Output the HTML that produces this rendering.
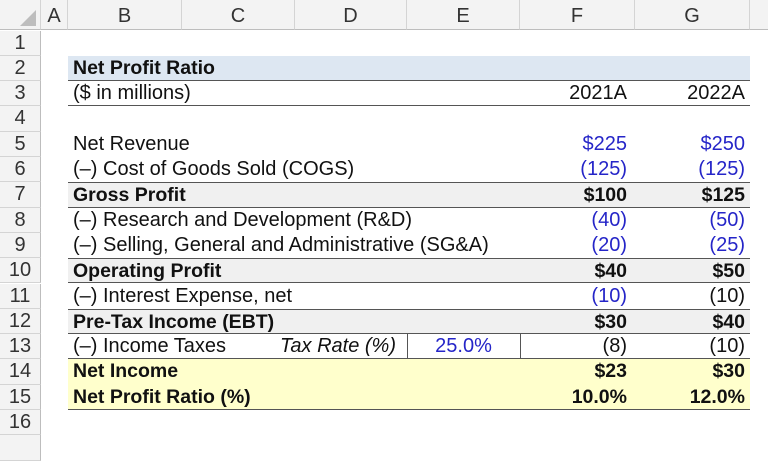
<!DOCTYPE html><html><head><style>
body{margin:0;width:768px;height:441px;overflow:hidden;background:#fff;font-family:"Liberation Sans",sans-serif;position:relative}
.h{position:absolute;top:0;height:30px;background:#f3f3f3;border-right:1px solid #d4d4d4;border-bottom:1px solid #bdbdbd;font-size:20px;color:#333;text-align:center;line-height:32px;box-sizing:border-box}
.rh{position:absolute;left:0;width:41px;height:25.3px;background:#f3f3f3;border-right:1px solid #bdbdbd;border-bottom:1px solid #d4d4d4;box-sizing:border-box;font-size:20px;color:#333;text-align:center;line-height:25px}
.r{position:absolute;left:68px;width:682px;height:25.3px;box-sizing:border-box;font-size:20px;line-height:25px;color:#111}
.r span{position:absolute;white-space:nowrap}
.l{left:5px}.f{right:123px;text-align:right}.g{right:5px;text-align:right}
.b{font-weight:bold;font-size:19.5px}.bl{color:#2525c8}
.gray{background:#f0f0f0;border-top:1px solid #555;border-bottom:1px solid #555}
</style></head><body>
<div class="h" style="left:0;width:41px"><svg width="41" height="30"><polygon points="36,10 36,26 20,26" fill="#bdbdbd"/></svg></div>
<div class="h" style="left:41px;width:27px">A</div>
<div class="h" style="left:68px;width:114px">B</div>
<div class="h" style="left:182px;width:113px">C</div>
<div class="h" style="left:295px;width:112px">D</div>
<div class="h" style="left:407px;width:113px">E</div>
<div class="h" style="left:520px;width:115px">F</div>
<div class="h" style="left:635px;width:115px">G</div>
<div class="h" style="left:750px;width:18px;border-right:none"></div>
<div class="rh" style="top:30.5px">1</div><div class="rh" style="top:55.8px">2</div><div class="rh" style="top:81.1px">3</div><div class="rh" style="top:106.4px">4</div><div class="rh" style="top:131.7px">5</div><div class="rh" style="top:157px">6</div><div class="rh" style="top:182.3px">7</div><div class="rh" style="top:207.6px">8</div><div class="rh" style="top:232.9px">9</div><div class="rh" style="top:258.2px">10</div><div class="rh" style="top:283.5px">11</div><div class="rh" style="top:308.8px">12</div><div class="rh" style="top:334.1px">13</div><div class="rh" style="top:359.4px">14</div><div class="rh" style="top:384.7px">15</div><div class="rh" style="top:410px">16</div><div class="rh" style="top:435.3px"></div>

<div class="r b" style="top:55.8px;background:#dde7f2;border-bottom:1px solid #555"><span class="l">Net Profit Ratio</span></div>
<div class="r" style="top:81.1px;border-bottom:1px solid #555"><span class="l">($ in millions)</span><span class="f">2021A</span><span class="g">2022A</span></div>
<div class="r" style="top:131.7px"><span class="l">Net Revenue</span><span class="f bl">$225</span><span class="g bl">$250</span></div>
<div class="r" style="top:157px"><span class="l">(–) Cost of Goods Sold (COGS)</span><span class="f bl">(125)</span><span class="g bl">(125)</span></div>
<div class="r b gray" style="top:182.3px"><span class="l">Gross Profit</span><span class="f">$100</span><span class="g">$125</span></div>
<div class="r" style="top:207.6px"><span class="l">(–) Research and Development (R&amp;D)</span><span class="f bl">(40)</span><span class="g bl">(50)</span></div>
<div class="r" style="top:232.9px"><span class="l">(–) Selling, General and Administrative (SG&amp;A)</span><span class="f bl">(20)</span><span class="g bl">(25)</span></div>
<div class="r b gray" style="top:258.2px"><span class="l">Operating Profit</span><span class="f">$40</span><span class="g">$50</span></div>
<div class="r" style="top:283.5px"><span class="l">(–) Interest Expense, net</span><span class="f bl">(10)</span><span class="g">(10)</span></div>
<div class="r b gray" style="top:308.8px"><span class="l">Pre-Tax Income (EBT)</span><span class="f">$30</span><span class="g">$40</span></div>
<div class="r" style="top:334.1px;border-bottom:1px solid #555"><span class="l">(–) Income Taxes</span><span style="right:354px;font-style:italic">Tax Rate (%)</span><span style="left:339px;width:1px;height:25px;background:#555"></span><span class="bl" style="left:339px;width:113px;text-align:center">25.0%</span><span style="left:452px;width:1px;height:25px;background:#555"></span><span class="f">(8)</span><span class="g">(10)</span></div>
<div class="r b" style="top:359.4px;background:#ffffcc"><span class="l">Net Income</span><span class="f">$23</span><span class="g">$30</span></div>
<div class="r b" style="top:384.7px;background:#ffffcc;border-bottom:1px solid #555"><span class="l">Net Profit Ratio (%)</span><span class="f">10.0%</span><span class="g">12.0%</span></div>
</body></html>
